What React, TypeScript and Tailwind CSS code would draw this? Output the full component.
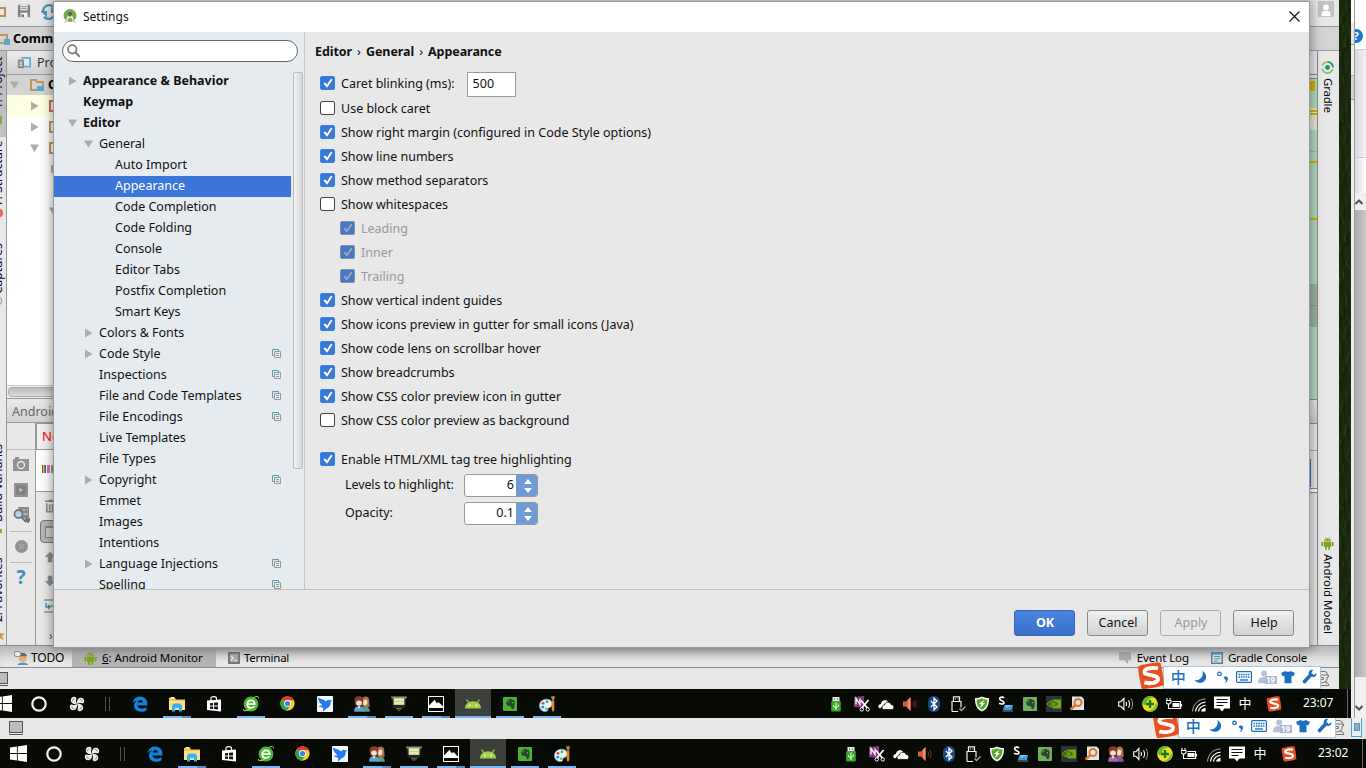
import React from "react";
import type { ReactNode } from "react";

/* ---------- small shared drawings ---------- */

type SvgProps = { w?: number; h?: number; box?: string; className?: string; children: ReactNode };
const Svg = ({ w = 16, h = 16, box = "0 0 16 16", className = "", children }: SvgProps) => (
  <svg width={w} height={h} viewBox={box} className={`shrink-0 ${className}`} fill="none">
    {children}
  </svg>
);

const DroidIcon = ({ size = 13 }: { size?: number }) => (
  <Svg w={size} h={size} box="0 0 13 13">
    <g fill="#7ba51c">
      <path d="M3 4.4C3 2.6 4.6 1.3 6.5 1.3S10 2.6 10 4.4zM3 5h7v5H3z" />
      <rect x="0.4" y="4.8" width="2" height="4.4" rx="1" />
      <rect x="10.6" y="4.8" width="2" height="4.4" rx="1" />
      <rect x="4" y="9" width="1.8" height="4" rx=".8" />
      <rect x="7.2" y="9" width="1.8" height="4" rx=".8" />
    </g>
    <path d="M4 .2l1 1.6M9 .2L8 1.8" stroke="#7ba51c" strokeWidth=".7" />
    <circle cx="5" cy="3" r=".5" fill="#fff" />
    <circle cx="8" cy="3" r=".5" fill="#fff" />
  </Svg>
);

const WindowsLogo = () => (
  <Svg w={17} h={17}>
    <path fill="#fff" d="M0 2.3L6.5 1.4V7.5H0zM7.3 1.3L16 0V7.5H7.3zM0 8.4H6.5V14.6L0 13.7zM7.3 8.4H16V16L7.3 14.7z" />
  </Svg>
);
const RingIcon = () => (
  <Svg>
    <circle cx="8" cy="8" r="6.700" stroke="#f4f4f4" strokeWidth="2.200" />
  </Svg>
);
const FanIcon = () => (
  <Svg>
    {[0, 90, 180, 270].map((a) => (
      <g key={a} transform={`rotate(${a} 8 8)`}>
        <path d="M8 8.200C4.500 8.300 1.800 7 1.800 4.200 1.800 1.600 4 .6 5.600.8 7.200 1 7.600 2.200 7.300 3.200 6.800 5 6.900 6.700 8 8.200z" fill="#ededed" />
        <path d="M3.600 5.200C3.300 3.800 4 2.900 5.400 3" stroke="#555" strokeWidth=".7" />
      </g>
    ))}
  </Svg>
);
const EdgeIcon = () => (
  <Svg>
    <path
      fill="#1283dd"
      d="M.5 7.3C1.2 3.2 4 .5 8.1.5c4.5 0 7.3 3 7.3 7.2v1.8H5.5c.2 2 1.9 3 4.2 3 1.8 0 3.3-.5 4.7-1.3v3.2c-1.5.8-3.4 1.3-5.4 1.3-4.2 0-7-2.3-7-6.1 0-2.3 1.1-4.1 3.3-5.3C3 4.600 1.500 5.800.5 7.300zM5.700 6.500h5.200C10.900 4.900 10 3.900 8.400 3.900S5.900 5 5.700 6.500z"
    />
  </Svg>
);
const FolderIcon = () => (
  <Svg>
    <path d="M0 2h6l1 1.500h9V14H0z" fill="#f5c84c" />
    <path d="M0 5h16v9H0z" fill="#ffe08a" />
    <path d="M1.500 1h4v1.500h-4z" fill="#fff3b0" />
    <path d="M3 15.500V9.500L5 7.500h6l2 2v6h-3v-3.500H6v3.500z" fill="#2fb4ee" />
  </Svg>
);
const StoreIcon = () => (
  <Svg>
    <path d="M5 5V2.500C5 1 6 .7 7.500.7S10.500 1 10.500 2.500V4" stroke="#fff" strokeWidth="1.200" />
    <path d="M1 4.500L15 3.500V15.500L1 14z" fill="#fff" />
    <path d="M4 7.200l3-.3v2.600H4zM8 6.800l4-.4v3.100H8zM4 10.400h3V13l-3-.3zM8 10.400h4v3.100L8 13z" fill="#111" />
  </Svg>
);
const BrowserIcon = () => (
  <Svg>
    <circle cx="8" cy="8" r="7.400" fill="#49b735" />
    <path d="M4.300 8.200h7.400c0-2.400-1.500-3.800-3.600-3.800-2.300 0-3.800 1.600-3.800 3.800s1.600 3.700 3.800 3.700c1.500 0 2.500-.6 3.200-1.700" stroke="#fff" strokeWidth="1.800" />
    <path d="M.8 13C-1 16 5 15 11 10.500" stroke="#c5ef6d" strokeWidth="1" />
    <path d="M10 2c3-2 6-2.500 5.500.5" stroke="#8fdc53" strokeWidth="1" />
  </Svg>
);
const ChromeIcon = () => (
  <Svg w={15} h={15}>
    <circle cx="8" cy="8" r="7.600" fill="#f8cf22" />
    <path d="M8 8L1.400 4.200A7.600 7.600 0 0 1 14.700 4.400H8z" fill="#e33b2e" />
    <path d="M1.400 4.200A7.600 7.600 0 0 0 7.300 15.600L11 9.700 8 8z" fill="#2fa24c" />
    <circle cx="8" cy="8" r="3.700" fill="#fff" />
    <circle cx="8" cy="8" r="2.800" fill="#3f80e6" />
  </Svg>
);
const BirdIcon = () => (
  <Svg>
    <rect width="16" height="16" rx="1" fill="#f6fafe" />
    <path d="M.8 1.500C4 3.200 7 3.400 9.200 5.600 9.600 3.900 11.500 3 13 4.200l2.600.2-2 1.600C14 9.300 12.200 11.600 9.600 12.200L6 15.800 6.200 12 1.300 9.900 5.600 9.200C3 7.300 1 4.800.8 1.500z" fill="#237cf0" />
  </Svg>
);
const PeopleIcon = ({ purple = false }: { purple?: boolean }) => (
  <Svg>
    <path d="M8 2.500C10-.5 15-.3 15.200 4l.4 7H8.500z" fill="#a8714a" />
    <path d="M9 4.500c1.500-1.500 4-1 4.300.5v2.500c-.5 2.500-4 2.500-4.300 0z" fill="#f9dcc4" />
    <path d="M8.500 15.700c0-4 .5-5 3-5s4 1 4.300 5z" fill={purple ? "#8c4fa8" : "#5e9c85"} />
    <path d="M.6 5C.4 1.500 2.500.2 5 .2s4.600 1.300 4.400 4.800L8.500 9.500h-7z" fill="#8a3d25" />
    <path d="M2.200 6c1-2 4.600-2 5.600 0v1.500C7.700 10.500 2.300 10.500 2.200 7.500z" fill="#fbe0cb" />
    <path d="M.2 15.700c0-4.500 1.500-5.500 4.800-5.500s4.800 1 4.800 5.500z" fill={purple ? "#a765b4" : "#5fa3cf"} />
    <path d="M3.800 10.200h2.400L5 13z" fill="#fff" />
  </Svg>
);
const ProjectorIcon = () => (
  <Svg>
    <path d="M0 .5h16L14 12H2z" fill="#262626" />
    <path d="M0 .5h16l-.6 2H.6z" fill="#8a8a8a" />
    <path d="M2.600 2h10.800v7H2.600z" fill="#c5d58b" />
    <path d="M3 4h10M3 7h10" stroke="#eef5c6" strokeWidth="1.300" />
    <path d="M5 12.700h6M6.500 14h3" stroke="#777" />
  </Svg>
);
const PhotoIcon = () => (
  <Svg>
    <rect x=".5" y=".5" width="15" height="15" fill="#080a06" stroke="#fff" />
    <path d="M1 9.500L3.500 7 6.500 3.800 9 7.500l1-1.500L11.500 7 13 8.500l2 2V12H1z" fill="#fff" />
    <path d="M1 9.500h2l1 1.500 2-1 1.500 1.500 2-1.500 1.500 1.500 2-1.500 2 2V11H1z" fill="#fff" />
  </Svg>
);
const AndroidHead = () => (
  <Svg>
    <path d="M0 12.500C0 8 3.500 5.200 8 5.200S16 8 16 12.500z" fill="#a2ce4c" />
    <path d="M1.500 3.500l2.300 3.200M14.500 3.500l-2.300 3.200" stroke="#a2ce4c" strokeWidth="1.200" />
    <circle cx="4.700" cy="9.400" r=".8" fill="#fff" />
    <circle cx="11.300" cy="9.400" r=".8" fill="#fff" />
  </Svg>
);
const EvernoteIcon = ({ pale = false }: { pale?: boolean }) => (
  <Svg w={14} h={14}>
    <rect width="16" height="16" rx="1.200" fill={pale ? "#6fb158" : "#45b52e"} />
    <path d="M3.500 5.200L6.300 2.700C8 2 10 2.400 11 3c2 .2 2.300 1.500 2.300 4 0 4-.6 6.500-2.300 6.800-1.600.1-2-1.400-1-2.500-1.500.2-2-.8-2.200-1.200C5.500 10.800 3.300 9.600 3.500 5.200z" fill="#34403a" />
    <path d="M3.500 5.500h3V3" stroke={pale ? "#6fb158" : "#45b52e"} strokeWidth=".8" />
    <circle cx="10.800" cy="6.600" r=".8" fill="#6fc25a" />
  </Svg>
);
const PaintIcon = () => (
  <Svg>
    <path d="M.4 9.500C.4 5.500 4 3 8 3.200s6 3 5 6-3.500 1.800-4 3.500 0 2.800-3 2.800-5.600-2.500-5.600-6z" fill="#e4f3fb" stroke="#5da9d8" strokeWidth=".7" />
    <circle cx="4" cy="7.300" r="1.400" fill="#e0453b" />
    <circle cx="8" cy="5.700" r="1.300" fill="#41a746" />
    <circle cx="3.800" cy="11.200" r="1.400" fill="#258bd3" />
    <circle cx="7.200" cy="12.700" r="1.200" fill="#65b84f" />
    <path d="M12 .3h4l-1 4h-2z" fill="#bb8550" />
    <path d="M12.700 4.500h2.600V14L14 16l-1.300-2z" fill="#ec8922" />
  </Svg>
);

const UsbGreen = () => (
  <Svg>
    <path d="M4.500 1h7v4h-7z" fill="#e9e9e9" />
    <path d="M6 2.500h1v1H6zM9 2.500h1v1H9z" fill="#444" />
    <rect x="3.200" y="5" width="9.600" height="10.500" rx="1" fill="#39a928" />
    <path d="M8 6.500v7.500M5.500 9v1.500L8 12M10.500 8.500V10L8 11.500" stroke="#fff" />
  </Svg>
);
const ClipperIcon = () => (
  <Svg>
    <path d="M0 1l10-1v12l-10-1z" fill="#80397b" />
    <path d="M2 8.500v-6l4 6v-6" stroke="#fff" strokeWidth="1.300" />
    <path d="M7 4.500l6.500 7.500M14.500 4l-6.500 8" stroke="#fff" strokeWidth="1.700" />
    <circle cx="7.800" cy="13.400" r="1.700" stroke="#fff" />
    <circle cx="13.700" cy="13.400" r="1.700" stroke="#fff" />
  </Svg>
);
const CloudIcon = () => (
  <Svg>
    <path d="M2 12.500C-1 11.500.5 8 3 8c0-4 5-5 7-2.500" fill="#fff" />
    <path d="M5 13.500C3 11.500 4.500 9 6.500 9c.5-3.500 5.500-3.800 6.500-.5 3-.1 3.800 4 1.200 5z" fill="#fff" stroke="#111" strokeWidth=".8" />
  </Svg>
);
const SpeakerRed = () => (
  <Svg>
    <path d="M1 5.500h3L8.500 1v14L4 10.500H1z" fill="#d5603d" />
    <path d="M6 4L8.500 1v14L6 12z" fill="#f08c6a" />
    <path d="M11 5.500q1.500 2.500 0 5M13 4q2.500 4 0 8" stroke="#7a2d20" />
  </Svg>
);
const BluetoothIcon = () => (
  <Svg>
    <rect x="2" y="0" width="12" height="16" rx="6" fill="#174a87" />
    <path d="M4.800 5L11 11l-3 2.800V2.200L11 5l-6.200 6" stroke="#fff" strokeWidth="1.300" />
  </Svg>
);
const UsbOutline = () => (
  <Svg>
    <path d="M3.500 5V.8h6V5M2 15.500V5.500h9v6M2 15.500h6" stroke="#f2f2f2" strokeWidth="1.200" />
    <path d="M5 2.500h1v1H5zM7.500 2.500h1v1h-1z" fill="#fff" />
    <path d="M9.500 12.500l2 2 4-4" stroke="#aaa" strokeWidth="1.300" />
  </Svg>
);
const ShieldIcon = () => (
  <Svg>
    <path d="M8 .4C10 1.800 13 2 15 2c0 6-1 11-7 13.600C2 13 1 8 1 2c2 0 5-.2 7-1.600z" fill="#f5f5f5" />
    <path d="M8 2.200C9.500 3 11.500 3.500 13.400 3.500c0 4.500-1 8-5.400 10.300C3.600 11.500 2.600 8 2.600 3.500 4.500 3.500 6.500 3 8 2.200z" fill="#58a72e" />
    <path d="M10.500 3.500L5 8h2.300L6 12l5-5H8.500z" fill="#fff" />
  </Svg>
);
const SyncIcon = () => (
  <Svg>
    <path d="M6.500 9h8.500l-1 5H5z" fill="#3b9bdb" />
    <path d="M7.500 9.300h6.800L8 12z" fill="#85c9f0" />
    <path d="M4.500 15H15" stroke="#888" strokeWidth="1" />
    <path d="M6 2C5.200.7 1.600.8 1.600 2.800S6 4.500 6 6.500 2 8.500 1.200 7" stroke="#fff" strokeWidth="1.600" />
  </Svg>
);
const NvidiaIcon = () => (
  <Svg>
    <rect width="16" height="16" fill="#2b323c" />
    <rect x="7" y="3.500" width="8" height="9" fill="#76a814" />
    <path d="M1 8c3-4.500 8.500-4.500 11.500 0-3 4-8.500 4-11.500 0z" fill="#3c5216" stroke="#79ad12" strokeWidth="1" />
    <path d="M3.800 8c1.500-2.400 4.700-2.400 6 0C8.500 10.300 5.300 10.300 3.800 8zm2.700-1v2l2-1z" stroke="#79ad12" strokeWidth=".9" />
  </Svg>
);
const FinderIcon = () => (
  <Svg>
    <path d="M3 .5h9.500L15 3v11H3z" fill="#dfe6ef" />
    <circle cx="9" cy="6.500" r="3.500" stroke="#e0782b" strokeWidth="2" />
    <path d="M6.500 9l-5 4.500" stroke="#e0782b" strokeWidth="2.600" />
  </Svg>
);
const VolumeIcon = () => (
  <Svg>
    <path d="M.7 5.700h2.200l3-3.200v11l-3-3.200H.7z" stroke="#fff" strokeWidth="1.100" />
    <path d="M8 6q1.200 2 0 4M10.500 4.300q2.200 3.700 0 7.400" stroke="#fff" strokeWidth="1.100" />
    <path d="M13 2.500q3.200 5.500 0 11" stroke="#999" />
  </Svg>
);
const PlusBall = () => (
  <Svg>
    <circle cx="8" cy="8" r="7.800" fill="#f6dc20" />
    <path d="M.8 5C3-.2 9-1.200 12.500 1.600 8 1.200 4.500 4 3.500 9.500 1.500 9 .5 7 .8 5z" fill="#5ebb31" />
    <path d="M15.200 10.500c-1.500 4.500-6 6.300-10 4.500 5-.6 7.500-3.500 8.500-8 1.500 1 1.800 2.200 1.500 3.500z" fill="#79c63a" />
    <path d="M8 4v8M4 8h8" stroke="#147b20" strokeWidth="2.400" />
  </Svg>
);
const BatteryIcon = () => (
  <Svg>
    <path d="M6.500 5.500h8v7H5.500" stroke="#fff" strokeWidth="1.200" />
    <path d="M6.500 7h7v4h-7zM15 8h1v2.500h-1z" fill="#fff" />
    <path d="M1 2v2.500M4 2v2.500M0 4.500h5v2L3.500 8h-2L0 6.500zM2.500 8v4.500h3" stroke="#fff" strokeWidth="1.100" />
  </Svg>
);
const WifiIcon = () => (
  <Svg>
    <path d="M2.500 15.500C3 8.500 8 3 15.500 3" stroke="#aaa" />
    <path d="M5.500 15.500c.5-5 4.500-9 10-9.300M8.500 15.500c.4-3.200 3.200-5.900 7-6.200" stroke="#fff" strokeWidth="1.200" />
    <path d="M11 15.500c.4-2 2.200-3.500 4.500-3.700v3.700z" fill="#fff" />
  </Svg>
);
const NoteIcon = () => (
  <Svg>
    <path d="M0 .5h16v12h-5.500L8 15.500 5.500 12.500H0z" fill="#fff" />
    <path d="M2.500 3.500h11M2.500 6.500h11M2.500 9.500h7" stroke="#111" />
  </Svg>
);
const SogouMark = ({ size = 16 }: { size?: number }) => (
  <Svg w={size} h={size}>
    <path d="M.6 2.800C.6 1.800 12.500-.2 13.300.5 14 1.200 15.800 12.500 15.200 13.200 14.600 14 4 15.900 3 15.400 2.200 15 .6 4 .6 2.800z" fill="#e8501f" />
    <path d="M12 3.700C9.500 3 4.300 3.400 4.200 5.700 4.100 8 11.900 7 12 9.600c.1 2.600-5 2.900-7.800 2.100" stroke="#fff" strokeWidth="2.200" />
  </Svg>
);

/* ---------- taskbars ---------- */

const apps: { icon: ReactNode; line?: "single" | "double"; active?: boolean }[] = [
  { icon: <EdgeIcon /> },
  { icon: <FolderIcon />, line: "double" },
  { icon: <StoreIcon /> },
  { icon: <BrowserIcon />, line: "single" },
  { icon: <ChromeIcon /> },
  { icon: <BirdIcon /> },
  { icon: <PeopleIcon />, line: "double" },
  { icon: <ProjectorIcon />, line: "single" },
  { icon: <PhotoIcon />, line: "double" },
  { icon: <AndroidHead />, line: "single", active: true },
  { icon: <EvernoteIcon />, line: "single" },
  { icon: <PaintIcon />, line: "single" },
];

const Slot = ({ children, className = "w-6" }: { children?: ReactNode; className?: string }) => (
  <div className={`flex shrink-0 items-center justify-center ${className}`}>{children}</div>
);

const Taskbar = ({ time, extra }: { time: string; extra: boolean }) => (
  <div className="flex h-full w-[1381px] shrink-0 bg-[#080b05]">
    <Slot className="w-9"><WindowsLogo /></Slot>
    <Slot className="w-9"><RingIcon /></Slot>
    <Slot className="w-10"><FanIcon /></Slot>
    <div className="flex w-6 items-center justify-center gap-[3px] pr-1">
      <div className="h-3.5 w-px bg-[#50524e]" />
      <div className="h-3.5 w-px bg-[#50524e]" />
    </div>
    {apps.map((a, i) => (
      <div key={i} className="flex w-[37px] shrink-0 flex-col items-stretch">
        <div className={`flex flex-1 items-center justify-center pt-[2px] ${a.active ? "ml-px bg-[#3d3f3a]" : ""}`}>{a.icon}</div>
        <div className={`flex h-0.5 ${a.active ? "ml-px" : "ml-[5px] w-7"}`}>
          {a.line && <div className="flex-1 bg-[#79b6f4]" />}
          {a.line === "double" && <div className="w-[9px] bg-[#5b8abb]" />}
        </div>
      </div>
    ))}
    <div className="w-[258px] shrink-0" />
    <Slot className="w-[26px] pr-px"><UsbGreen /></Slot>
    <Slot className="w-6 pl-px"><ClipperIcon /></Slot>
    <Slot className="w-6 pl-px"><CloudIcon /></Slot>
    <Slot className="w-6 pl-px"><SpeakerRed /></Slot>
    <Slot className="w-6 pl-px"><BluetoothIcon /></Slot>
    <Slot className="w-6 pl-px"><UsbOutline /></Slot>
    <Slot className="w-6 pl-px"><ShieldIcon /></Slot>
    <Slot className="w-6 pl-px"><SyncIcon /></Slot>
    <Slot className="w-6 pl-px"><EvernoteIcon pale /></Slot>
    <Slot className="w-6 pl-px"><NvidiaIcon /></Slot>
    <Slot className="w-6 pr-px"><FinderIcon /></Slot>
    <Slot>{extra && <PeopleIcon purple />}</Slot>
    <Slot className="w-6 pl-px"><VolumeIcon /></Slot>
    <Slot className="w-6 pl-px"><PlusBall /></Slot>
    <Slot className="w-6 pl-px"><BatteryIcon /></Slot>
    <Slot className="w-[26px]"><WifiIcon /></Slot>
    <Slot className="w-[22px]"><NoteIcon /></Slot>
    <Slot className="w-6 pb-0.5 font-['Noto_Sans_CJK_SC',sans-serif] text-[13px] text-white">中</Slot>
    <Slot className="w-[34px]"><SogouMark /></Slot>
    <div className="mr-3 ml-3 flex w-8 items-center pb-0.5 text-[12px] tracking-[-0.1px] text-white">{time}</div>
    <div className="h-full w-px bg-[#666]" />
  </div>
);

/* ---------- floating input method bar ---------- */

const InputBar = () => (
  <div className="flex items-start">
    <div className="z-10 -mr-0.5"><SogouMark size={28} /></div>
    <div className="mt-1 flex h-[23px] w-[158px] items-center border border-[#a9c8e0] bg-white pb-0.5 pl-1 text-[#1b70c0]">
      <div className="flex w-[21px] justify-center font-['Noto_Sans_CJK_SC',sans-serif] text-[15px] leading-none font-medium">中</div>
      <Slot><Svg w={14} h={14}><path d="M9.500 1C15 4 15 10 11.500 12.800 8 15.600 3 15 .5 11.500 5 13 12 8 9.500 1z" fill="#1b70c0" /></Svg></Slot>
      <Slot className="w-5">
        <Svg w={14} h={14}><circle cx="4" cy="4.500" r="2" stroke="#1b70c0" strokeWidth="1.500" /><path d="M9.500 7.500q5-1 4 3.500-.6 3-3.600 4 1.700-2 1.600-3.500-3-.5-2-4z" fill="#1b70c0" /></Svg>
      </Slot>
      <Slot className="w-6 pr-0.5">
        <Svg w={16} h={12} box="0 0 16 12"><rect x=".6" y=".6" width="14.800" height="10.800" rx="1" stroke="#1b70c0" strokeWidth="1.200" /><path d="M2.500 3.500h11M2.500 6h11" stroke="#1b70c0" strokeWidth="1.600" strokeDasharray="1.600 .8" /><path d="M4 9h8" stroke="#1b70c0" strokeWidth="1.400" /></Svg>
      </Slot>
      <div className="relative flex w-[22px] justify-center">
        <Svg w={14} h={14} className="-ml-1"><circle cx="7" cy="4" r="3.400" fill="#b5c1d8" /><path d="M0 15c0-5 2-7 7-7s7 2 7 7z" fill="#b5c1d8" /></Svg>
        <span className="absolute top-1.5 left-2 flex h-2 w-[12px] items-center justify-center bg-[#aab7d0] text-[8px] leading-none font-bold text-white">19</span>
      </div>
      <Slot className="w-5"><Svg w={14} h={14}><path d="M5 1q3 2 6 0l5 2.500-2 4-2-.8V15H4V6.700l-2 .8-2-4z" fill="#1b70c0" /></Svg></Slot>
      <Slot className="w-[22px]"><Svg w={15} h={15}><path d="M15.500 4.500L12.500 6.500 10 4 12 .8C9 .2 6.500 2.500 7.300 5.700L.8 12.500q-.5 1.500.8 2.500 1.300.8 2.300-.2L10 8.300C13.200 9 16 7.500 15.500 4.500z" fill="#1b70c0" /></Svg></Slot>
    </div>
    <Svg w={9} h={16} className="mt-2" box="0 0 9 16">
      <path d="M0 1.500h4q2.500.5 2.500 3.500M0 5h7.500v2H6v3.500Q3 13 0 13M0 7.500h2.500v2H0M4 12.500q4 0 4 3H0" stroke="#777" strokeWidth="1" />
    </Svg>
  </div>
);

const MemoryBox = () => (
  <div className="flex shrink-0 flex-col gap-px">
    <div className="h-3 w-3.5 border border-[#555] bg-[#bdbdbd]" />
    <div className="h-px w-3.5 bg-[#555]" />
  </div>
);

/* ---------- IDE behind the dialog ---------- */

const RailText = ({ children, className }: { children: ReactNode; className: string }) => (
  <div className={`-ml-[10px] flex w-4 shrink-0 rotate-180 items-center justify-center text-[12px] leading-4 whitespace-nowrap text-[#05053c] [writing-mode:vertical-rl] ${className}`}>
    {children}
  </div>
);

const Right = () => <Svg w={9} h={10} box="0 0 9 10"><path d="M1 0.500L8.500 5 1 9.500z" fill="#acacac" /></Svg>;
const Down = () => <Svg w={9} h={8} box="0 0 9 8"><path d="M0 .5h9L4.500 8z" fill="#acacac" /></Svg>;

const SmallFolder = ({ color = "#bf955c" }: { color?: string }) => (
  <Svg w={15} h={14} box="0 0 15 14">
    <path d="M1 2h5l1 2h6v8H1z" stroke={color} strokeWidth="2" />
    <path d="M7 8h7v5H7z" fill="#55a7cf" />
  </Svg>
);

const LeftBackdrop = () => (
  <div className="flex w-[60px] shrink-0 flex-col overflow-hidden">
    <div className="flex h-[27px] shrink-0 items-start gap-2.5 border-b border-[#999] bg-[#e8e8e8] pt-1">
      <Svg w={6} h={16} box="0 0 6 16"><path d="M0 4h5v8H0" stroke="#be8e50" strokeWidth="2" /></Svg>
      <Svg w={14} h={14} className="ml-px"><path d="M1 1h14v14H1z" fill="#858585" /><path d="M4 1h8v6H4zM4 10h8v5H4z" fill="#f3f3f3" /><path d="M5 3h6M5 5h6" stroke="#777" /><path d="M5 12h3v3H5z" fill="#3488b5" /></Svg>
      <Svg w={16} h={16}><path d="M13 3C8-1 2 2 2 8M3 13c5 4 11 1 11-5" stroke="#4f95bb" strokeWidth="2.400" /><path d="M-1 7h7v6zM16 9h-6V3z" fill="#4f95bb" /></Svg>
    </div>
    <div className="flex h-6 shrink-0 items-center border-b border-[#999] bg-[#d4d4d4] pt-px text-[12.500px] font-bold">
      <Svg w={10} h={14} box="0 0 10 14"><path d="M0 3h7v8H0" stroke="#bf955c" strokeWidth="2" /><path d="M4 7h6v6H4z" fill="#58a7cf" /></Svg>
      <span className="ml-[3px]">Comm</span>
    </div>
    <div className="flex min-h-0 flex-1">
      <div className="flex w-[7px] shrink-0 flex-col overflow-hidden border-r border-[#999] bg-[#e8e8e8]">
        <div className="flex h-[86px] shrink-0 flex-col bg-[#c0c0c0]">
          <RailText className="h-[64px]">1: Project</RailText>
          <div className="-ml-1 h-2.5 w-1.5 rounded-full bg-[#79ac3a]" />
        </div>
        <RailText className="h-[72px]">7: Structure</RailText>
        <div className="-ml-1 h-2 w-[7px] shrink-0 rounded-full bg-[#e06a64]" />
        <RailText className="mt-6 h-[56px]">Captures</RailText>
        <div className="-ml-1 h-2 w-1.5 shrink-0 rounded-full border border-[#999]" />
        <RailText className="mt-[132px] h-[92px]">Build Variants</RailText>
        <div className="h-1 w-0.5 bg-[#89ae29]" />
        <RailText className="mt-5 h-[74px]">2: Favorites</RailText>
        <Svg w={6} h={10} box="0 0 6 10" className="mt-1"><path d="M0 2l5 1-3 2 2 4-4-2z" fill="#d69545" /></Svg>
      </div>
      <div className="flex min-w-0 flex-1 flex-col bg-white text-[12.500px]">
        <div className="flex h-[24px] shrink-0 items-center gap-1.5 border-b border-[#999] bg-linear-to-b from-[#ececec] to-[#d0d0d0] pt-px pl-2.5 text-[#333]">
          <Svg w={14} h={14}><path d="M5 2h10v10H8" stroke="#6baac8" strokeWidth="2" fill="#d4eaf6" /><path d="M1 4h7v10H1z" fill="#888" /><path d="M3 7h3M3 9h3M3 11h3" stroke="#fff" /></Svg>
          Pro
        </div>
        <div className="flex h-5 shrink-0 items-center bg-[#d4d4d4] pl-[3px]"><Down /><div className="ml-[11px]"><SmallFolder /></div><b className="ml-[3px]">C</b></div>
        <div className="flex h-[21px] shrink-0 items-center bg-[#ffffe4] pl-[23px]"><Right /><div className="ml-2.5"><SmallFolder color="#cd6860" /></div></div>
        <div className="flex h-[21px] shrink-0 items-center pl-[23px]"><Right /><div className="ml-2.5"><SmallFolder /></div></div>
        <div className="flex h-[21px] shrink-0 items-center pl-[23px]"><Down /><div className="ml-2.5"><SmallFolder /></div></div>
        <div className="flex h-[21px] shrink-0 items-center pl-[43px]"><Right /></div>
        <div className="mt-[21px] flex h-[21px] shrink-0 items-center pl-[42px]"><Down /></div>
        <div className="flex-1" />
        <div className="h-[13px] shrink-0 border-t border-[#ccc] bg-[#eee] pt-px pl-px"><div className="h-2.5 rounded-sm border border-[#aaa] bg-linear-to-b from-[#bbb] to-[#ddd]" /></div>
        <div className="flex h-[25px] shrink-0 items-center border-y border-[#999] bg-linear-to-b from-[#eaeaea] to-[#d2d2d2] pt-1 pl-[5px] text-[#666]">Android</div>
        <div className="flex h-[222px] shrink-0 bg-[#e8e8e8]">
          <div className="flex w-[29px] shrink-0 flex-col items-center border-r border-[#999]">
            <div className="h-[27px] w-full shrink-0 border-b border-[#bbb]" />
            <Svg w={16} h={14} box="0 0 16 14" className="mt-[7px]"><path d="M0 2h16v12H0zM2 0h4v2H2z" fill="#929292" /><circle cx="8" cy="8" r="3.500" stroke="#eee" strokeWidth="1.300" /></Svg>
            <Svg w={14} h={14} className="mt-3"><rect width="16" height="16" fill="#929292" /><rect x="2.500" y="2.500" width="11" height="11" fill="#808080" /><path d="M6 5.500l4.500 2.500L6 10.500z" fill="#c4c4c4" /></Svg>
            <Svg w={17} h={17} className="mt-[9px]" box="0 0 17 17"><path d="M5 1h11v11H9z" fill="#888" /><path d="M10 4h2M14 4h1M10 8h5" stroke="#ddd" /><circle cx="5.500" cy="8" r="4" fill="#b2d7eb" stroke="#777" strokeWidth="1.800" /><path d="M8 11l5 5M13 13h4l-2 3z" stroke="#666" strokeWidth="1.700" /></Svg>
            <div className="mt-2 h-px w-[22px] shrink-0 bg-[#bbb]" />
            <Svg w={13} h={13} className="mt-2"><circle cx="8" cy="8" r="8" fill="#929292" /><path d="M5 5l6 6M11 5l-6 6" stroke="#aaa" strokeWidth="1.500" /></Svg>
            <div className="mt-[9px] h-px w-[22px] shrink-0 bg-[#bbb]" />
            <div className="mt-px text-[19px] leading-[26px] font-bold text-[#3a8fbd]">?</div>
          </div>
          <div className="flex min-w-0 flex-1 flex-col overflow-hidden">
            <div className="flex h-[27px] shrink-0 items-center border border-[#999] bg-[#f0f0f0] pl-[5px] text-[13px] text-[#f00]">No</div>
            <div className="flex h-[42px] shrink-0 items-center border-b border-[#999] bg-white pr-1 pb-1 pl-1.5">
              <div className="h-2 w-px bg-[#c33]" /><div className="h-2 w-px bg-[#dc3]" /><div className="h-2 w-px bg-[#4a4]" /><div className="mr-px h-2 w-px bg-[#36b]" />
              <div className="mr-px h-2 w-[3px] bg-[#e068c8]" /><div className="h-2 w-1 bg-[#8ba54b]" />
            </div>
            <Svg w={15} h={16} className="mt-1.5 ml-2"><path d="M1 3h13M5 2h6M3 5v9h9V5M6 6v7M9 6v7" stroke="#888" strokeWidth="1.600" /></Svg>
            <div className="mt-1.5 ml-1 flex h-[23px] w-6 shrink-0 items-center rounded-sm border border-[#777] bg-[#b7b7b7] pl-1"><div className="h-3 w-3 border border-t-2 border-[#888] bg-[#ccc]" /></div>
            <Svg w={12} h={12} className="mt-2 ml-2"><path d="M8 1l7 7h-4v7H5V8H1z" fill="#8b8b8b" /></Svg>
            <Svg w={12} h={12} className="mt-3 ml-2"><path d="M5 1h6v7h4l-7 7-7-7h4z" fill="#8b8b8b" /></Svg>
            <Svg w={12} h={14} box="0 0 12 14" className="mt-3 ml-2"><path d="M0 1h12M6 7h6M0 13h12" stroke="#666" /><path d="M2 4v4h4M4 6l2 2-2 2" stroke="#3d8bb5" strokeWidth="1.300" /></Svg>
            <div className="mt-[17px] ml-[13px] text-[12px] leading-none text-[#555]">›</div>
          </div>
        </div>
      </div>
    </div>
  </div>
);

const RightBackdrop = () => (
  <div className="flex w-[39px] shrink-0 flex-col">
    <div className="flex h-[27px] shrink-0 justify-end border-b border-[#999] bg-[#e8e8e8] pr-[5px]">
      <div className="mt-px flex h-4 w-4 items-end justify-center bg-[#c3c3c3]"><Svg w={12} h={14}><circle cx="8" cy="4.500" r="3.800" fill="#fff" /><path d="M2 16v-4q1-3 6-3t6 3v4z" fill="#fff" /></Svg></div>
    </div>
    <div className="h-6 shrink-0 border-b border-[#999] bg-[#d4d4d4]" />
    <div className="flex min-h-0 flex-1">
      <div className="flex w-[18px] shrink-0 flex-col border-r border-[#8a8a8a] bg-[#e8e8e8]">
        <div className="h-6 shrink-0 border-b border-[#888]" />
        <div className="h-1 shrink-0 border-b border-[#888]" />
        <div className="h-[29px] shrink-0 bg-[#b3dabd] pt-[2px] pl-2.5"><div className="h-2.5 w-[5px] bg-[#d4b200]" /></div>
        <div className="h-[22px] shrink-0 bg-[#eae8cf] pt-[2px]"><div className="mb-px h-0.5 bg-[#d4b200]" /><div className="h-0.5 bg-[#d4b200]" /></div>
        <div className="h-[22px] shrink-0 border-b border-[#9bbba3] bg-[#b3dabd]" />
        <div className="h-[9px] shrink-0 bg-[#b3dabd]" />
        <div className="h-0.5 shrink-0 bg-[#d4b200]" />
        <div className="h-[55px] shrink-0 bg-[#b3dabd]" />
        <div className="h-0.5 shrink-0 bg-[#d4b200]" />
        <div className="h-[64px] shrink-0 bg-[#b3dabd]" />
        <div className="h-[22px] shrink-0 border-b border-[#889c8c] bg-[#9db5a2]" />
        <div className="h-[21px] shrink-0 bg-[#9db5a2]" />
        <div className="h-[72px] shrink-0 bg-[#b3dabd]" />
        <div className="h-[25px] shrink-0 border-y border-[#888] bg-linear-to-b from-[#e8e8e8] to-[#d0d0d0]" />
        <div className="h-[27px] shrink-0 border-b border-[#aaa]" />
        <div className="h-[38px] shrink-0 border-b border-[#888] py-2"><div className="h-7 w-[11px] bg-[#3c72ca]" /></div>
        <div className="h-1 shrink-0 border-b border-[#888] bg-white" />
      </div>
      <div className="flex flex-1 flex-col items-center bg-[#e8e8e8] pr-[2px] text-[12px] text-black">
        <Svg w={13} h={13} className="mt-2.5"><circle cx="8" cy="8" r="6.800" stroke="#86bd63" strokeWidth="2" strokeDasharray="17 4" transform="rotate(20 8 8)" /><path d="M8 1.200A6.800 6.800 0 0 1 14.800 8" stroke="#189959" strokeWidth="2" /><circle cx="8" cy="8" r="3" fill="#189959" /></Svg>
        <div className="mt-1 h-[35px] w-4 text-[11.500px] leading-4 tracking-[-0.2px] whitespace-nowrap [writing-mode:vertical-rl]">Gradle</div>
        <div className="h-[424px] shrink-0" />
        <DroidIcon />
        <div className="mt-1 h-[82px] w-4 text-[11.500px] leading-4 whitespace-nowrap [writing-mode:vertical-rl]">Android Model</div>
      </div>
    </div>
  </div>
);

const BottomTools = () => (
  <div className="flex h-[23px] shrink-0 items-stretch border-y border-[#8c8c8c] bg-[#e8e8e8] pt-px text-[11.500px] tracking-[-0.08px] shadow-[inset_0_14px_12px_-6px_rgba(0,0,0,0.22)]">
    <div className="flex w-[72px] items-center gap-[3px] pt-0.5 pl-3.5 text-[12px]">
      <Svg w={14} h={14}><circle cx="10" cy="8" r="4.500" fill="#e5ad78" /><path d="M5 6c1-6 9-5 10 0z" fill="#656565" /><path d="M4 16c0-4 12-4 12 0z" fill="#4b98c6" /><ellipse cx="4" cy="3.500" rx="4" ry="3" fill="#eee" stroke="#777" /></Svg>
      <span className="tracking-[-0.2px]">TODO</span>
    </div>
    <div className="-mt-px flex w-36 items-center gap-[5px] bg-[#b4b4b4] pt-[3px] pl-3">
      <DroidIcon />
      <span><u>6</u>: Android Monitor</span>
    </div>
    <div className="flex items-center gap-1 pt-0.5 pl-3">
      <Svg w={12} h={12}><rect width="16" height="16" fill="#777" /><rect x="2.500" y="2.500" width="11" height="11" fill="#aaa" /><path d="M4 5l3 3-3 3M8 11h4" stroke="#f2f2f2" strokeWidth="1.500" /></Svg>
      <span className="tracking-[-0.25px]">Terminal</span>
    </div>
    <div className="flex-1" />
    <div className="flex items-center gap-1.5 pt-0.5 pr-[22px]"><Svg w={12} h={12}><path d="M0 0h16v11h-4v5l-5-5H0z" fill="#aaa" /></Svg>Event Log</div>
    <div className="flex items-center gap-[5px] pt-0.5 pr-8"><Svg w={12} h={12}><rect x="1" y="1" width="14" height="14" fill="#cfe5f0" stroke="#777" strokeWidth="2" /><path d="M1 2h14" stroke="#4f9dc3" strokeWidth="3" /><path d="M4 6h8M4 9h8M4 12h5" stroke="#397b9c" /></Svg><span className="tracking-[-0.22px]">Gradle Console</span></div>
  </div>
);

/* ---------- settings dialog ---------- */

type Node = { label: string; depth: 0 | 1 | 2; arrow?: "right" | "down"; copy?: boolean };
const tree: Node[] = [
  { label: "Appearance & Behavior", depth: 0, arrow: "right" },
  { label: "Keymap", depth: 0 },
  { label: "Editor", depth: 0, arrow: "down" },
  { label: "General", depth: 1, arrow: "down" },
  { label: "Auto Import", depth: 2 },
  { label: "Appearance", depth: 2 },
  { label: "Code Completion", depth: 2 },
  { label: "Code Folding", depth: 2 },
  { label: "Console", depth: 2 },
  { label: "Editor Tabs", depth: 2 },
  { label: "Postfix Completion", depth: 2 },
  { label: "Smart Keys", depth: 2 },
  { label: "Colors & Fonts", depth: 1, arrow: "right" },
  { label: "Code Style", depth: 1, arrow: "right", copy: true },
  { label: "Inspections", depth: 1, copy: true },
  { label: "File and Code Templates", depth: 1, copy: true },
  { label: "File Encodings", depth: 1, copy: true },
  { label: "Live Templates", depth: 1 },
  { label: "File Types", depth: 1 },
  { label: "Copyright", depth: 1, arrow: "right", copy: true },
  { label: "Emmet", depth: 1 },
  { label: "Images", depth: 1 },
  { label: "Intentions", depth: 1 },
  { label: "Language Injections", depth: 1, arrow: "right", copy: true },
  { label: "Spelling", depth: 1, copy: true },
];
const indents = ["pl-3.5", "pl-[30px]", "pl-[46px]"];

const TreeRow = ({ node }: { node: Node }) => {
  const selected = node.label === "Appearance";
  return (
    <div className={`flex h-[21px] shrink-0 items-center pr-2.5 pb-px ${indents[node.depth]} ${selected ? "bg-[#3a75d7] text-white" : ""}`}>
      <div className="flex w-[15px] shrink-0 items-center">{node.arrow === "right" ? <Right /> : node.arrow === "down" ? <Down /> : null}</div>
      <span className={`flex-1 whitespace-nowrap ${node.depth === 0 ? "font-bold" : ""}`}>{node.label}</span>
      {node.copy && (
        <Svg w={9} h={9} box="0 0 9 9" className="mb-px">
          <path d="M2 6.500H.5v-6h6V2" stroke="#5b9dbb" />
          <path d="M2.500 2.500h6v6h-6zM4 4.500h3M4 6.500h3" stroke="#999" />
        </Svg>
      )}
    </div>
  );
};

const Check = ({ label, on = true, dim = false }: { label: string; on?: boolean; dim?: boolean }) => (
  <div className={`flex h-6 items-center ${dim ? "ml-5 text-[#999]" : ""}`}>
    <div className={`mr-1.5 mb-0.5 flex h-3.5 w-[15px] shrink-0 items-center justify-center rounded-[2px] ${on ? (dim ? "border border-[#8b8f97] bg-[#3e78cf]" : "border border-[#2f85ef] bg-[#3c76d4]") : "border border-[#444] bg-white"}`}>
      {on && (
        <Svg w={10} h={10} box="0 0 10 10">
          <path d="M1.300 5L4 8.200 8.700 1.300" stroke={dim ? "#a6a6a6" : "#fff"} strokeWidth="2" />
        </Svg>
      )}
    </div>
    <span className="pt-px whitespace-nowrap">{label}</span>
  </div>
);

const Spinner = ({ value }: { value: string }) => (
  <div className="flex h-[23px] w-[74px] overflow-hidden rounded-[3px] border border-[#999] bg-white">
    <div className="flex flex-1 items-center justify-end pr-0.5 pb-px">{value}</div>
    <div className="flex w-[21px] flex-col items-center justify-center gap-1 bg-[#6e9bd6] pt-px pl-0.5">
      <Svg w={8} h={5} box="0 0 8 5"><path d="M0 5h8L4 0z" fill="#fff" /></Svg>
      <Svg w={8} h={5} box="0 0 8 5"><path d="M0 0h8L4 5z" fill="#fff" /></Svg>
    </div>
  </div>
);

const Button = ({ label, kind = "plain" }: { label: string; kind?: "plain" | "primary" | "off" }) => (
  <div className={`flex h-[26px] w-[61px] items-center justify-center rounded-[3px] border pt-px pl-px ${kind === "primary" ? "border-[#3569b8] bg-linear-to-b from-[#4a86e0] to-[#386fc9] font-bold text-white" : kind === "off" ? "border-[#aaa] bg-[#e8e8e8] text-[#999]" : "border-[#888] bg-linear-to-b from-[#f0f0f0] to-[#d2d2d2]"}`}>
    {label}
  </div>
);

const Dialog = () => (
  <div className="absolute top-px left-[53px] flex h-[647px] w-[1257px] flex-col border border-[#999] bg-[#e8e8e8] text-[12.500px] text-[#111] shadow-[0_0_10px_2px_rgba(0,0,0,0.35)]">
    <div className="flex h-[30px] shrink-0 items-center bg-white pl-[9px]">
      <Svg w={14} h={15} box="0 0 14 15" className="mb-0.5"><circle cx="7" cy="6.500" r="6.500" fill="#77ad45" /><path d="M7 3l-3.500 9M7 3l3.500 9M4.500 8.500h5" stroke="#e8e8e8" strokeWidth="1.500" /><circle cx="7" cy="5" r="2.200" fill="#5c6268" /><path d="M2 13.500l1.500-2M12 13.500l-1.500-2" stroke="#999" /></Svg>
      <span className="ml-1.5 flex-1 text-[12px]">Settings</span>
      <Svg w={11} h={11} className="mr-[9px] mb-px" box="0 0 11 11"><path d="M.5.5l10 10M10.500.5l-10 10" stroke="#111" strokeWidth="1.100" /></Svg>
    </div>
    <div className="flex min-h-0 flex-1">
      <div className="flex w-[251px] shrink-0 flex-col border-r border-[#c4c4c4] bg-[#e6ebf0]">
        <div className="mt-2 ml-2 flex h-[22px] w-[236px] shrink-0 items-center rounded-full border border-[#666] bg-white pl-1">
          <Svg w={14} h={14} box="0 0 14 14"><circle cx="5.300" cy="5.300" r="4.200" stroke="#808080" strokeWidth="1.800" /><path d="M8.300 8.300l4.500 4.500" stroke="#808080" strokeWidth="2.200" /></Svg>
        </div>
        <div className="mt-[9px] flex min-h-0 flex-1">
          <div className="flex w-[237px] shrink-0 flex-col overflow-hidden">
            {tree.map((n) => <TreeRow key={n.label} node={n} />)}
          </div>
          <div className="mt-px ml-0.5 h-[397px] w-2.5 rounded-xs border border-[#bbb] bg-linear-to-r from-[#f4f4f4] to-[#d4d4d4]" />
        </div>
      </div>
      <div className="flex flex-1 flex-col pl-2.5">
        <div className="mt-2.5 flex h-5 items-center gap-[5px] font-bold tracking-[-0.06px]">
          <span>Editor</span><span className="font-normal">›</span><span>General</span><span className="font-normal">›</span><span>Appearance</span>
        </div>
        <div className="mt-[10px] ml-[5px] flex flex-col">
          <div className="mb-px flex h-6 items-start">
            <Check label="Caret blinking (ms):" />
            <div className="ml-3 flex h-[25px] w-[49px] shrink-0 items-center border border-[#999] bg-white pb-px pl-[5px]">500</div>
          </div>
          <Check label="Use block caret" on={false} />
          <Check label="Show right margin (configured in Code Style options)" />
          <Check label="Show line numbers" />
          <Check label="Show method separators" />
          <Check label="Show whitespaces" on={false} />
          <Check label="Leading" dim />
          <Check label="Inner" dim />
          <Check label="Trailing" dim />
          <Check label="Show vertical indent guides" />
          <Check label="Show icons preview in gutter for small icons (Java)" />
          <Check label="Show code lens on scrollbar hover" />
          <Check label="Show breadcrumbs" />
          <Check label="Show CSS color preview icon in gutter" />
          <Check label="Show CSS color preview as background" on={false} />
          <div className="h-[15px]" />
          <Check label="Enable HTML/XML tag tree highlighting" />
          <div className="mt-[2px] ml-[25px] flex h-[23px] items-center"><span className="w-[119px] pb-px tracking-[-0.1px]">Levels to highlight:</span><Spinner value="6" /></div>
          <div className="mt-[5px] ml-[25px] flex h-[23px] items-center"><span className="w-[119px] pb-px">Opacity:</span><Spinner value="0.1" /></div>
        </div>
      </div>
    </div>
    <div className="flex h-[58px] shrink-0 justify-end gap-3 border-t border-[#c0c0c0] pt-5 pr-[15px]">
      <Button label="OK" kind="primary" />
      <Button label="Cancel" />
      <Button label="Apply" kind="off" />
      <Button label="Help" />
    </div>
  </div>
);

/* ---------- desktops ---------- */

const Grass = () => (
  <div className="w-3 shrink-0 bg-[#1a290d]">
    <svg width="12" height="689" viewBox="0 0 12 689">
      {Array.from({ length: 260 }, (_, i) => (
        <path key={i} d={`M${(i * 7) % 12} ${i * 2.7}l${((i * 5) % 9) - 4} ${5 + ((i * 3) % 8)}`} stroke={i % 3 === 0 ? "#0f1a07" : i % 3 === 1 ? "#2c4416" : "#1f3310"} strokeWidth="0.8" />
      ))}
    </svg>
  </div>
);

const InnerDesktop = () => (
  <div className="relative flex h-[718px] w-[1351px] shrink-0 flex-col overflow-hidden">
    <div className="flex h-[689px] shrink-0">
      <div className="relative flex w-[1339px] shrink-0 flex-col overflow-hidden bg-[#e8e8e8]">
        <div className="flex h-[645px] shrink-0 justify-between">
          <LeftBackdrop />
          <RightBackdrop />
        </div>
        <BottomTools />
        <div className="-ml-1.5 flex flex-1 pt-1"><MemoryBox /></div>
        <Dialog />
      </div>
      <Grass />
    </div>
    <div className="-ml-[15px] flex h-[29px] shrink-0"><Taskbar time="23:07" extra={false} /></div>
    <div className="absolute top-[662px] left-[1137px]"><InputBar /></div>
  </div>
);

const OuterEdge = () => (
  <div className="flex w-[15px] shrink-0">
    <div className="flex w-1 shrink-0 flex-col border-r border-[#999] bg-[#eee]">
      <div className="h-[23px] bg-white" />
      <div className="h-[22px] border-b border-[#999] bg-[#e8e8e8]" />
      <div className="h-[31px] border-b border-[#aaa] bg-[#eee]" />
      <div className="h-6 border-b border-[#999] bg-[#d4d4d4]" />
    </div>
    <div className="flex flex-1 flex-col overflow-hidden bg-[#f0f0f0]">
      <div className="flex h-[50px] shrink-0 items-end border-b border-[#ccd] bg-white"><div className="-ml-1.5 mb-1.5 flex h-3.5 w-3.5 items-center justify-center rounded-full bg-[#1976d2] text-[11px] font-bold text-white">?</div></div>
      <div className="h-[108px] shrink-0 border-b border-[#ccd] bg-linear-to-r from-[#d9dadd] to-[#f0f2f8]" />
      <div className="h-[35px] shrink-0 bg-linear-to-r from-[#ddd] to-white" />
      <div className="flex h-[17px] shrink-0 items-center"><Svg w={8} h={6} box="0 0 8 6"><path d="M.5 5L4 1.500 7.500 5" stroke="#555" strokeWidth="2" /></Svg></div>
      <div className="h-[467px] shrink-0 bg-linear-to-r from-[#aaa] to-[#cacaca]" />
      <div className="flex flex-1 items-center pt-5"><Svg w={8} h={6} box="0 0 8 6"><path d="M.5 1L4 4.500 7.500 1" stroke="#555" strokeWidth="2" /></Svg></div>
    </div>
  </div>
);

export default function App() {
  return (
    <div className="relative flex h-[768px] w-[1366px] flex-col overflow-hidden bg-[#e8e8e8] font-['Noto_Sans','Noto_Sans_CJK_SC',sans-serif] text-black">
      <div className="flex h-[718px] shrink-0">
        <InnerDesktop />
        <OuterEdge />
      </div>
      <div className="relative flex h-[21px] shrink-0 overflow-hidden bg-[#e8e8e8] pt-[3px] pl-[9px]">
        <MemoryBox />
        <div className="absolute -top-[7px] left-[1152px]"><InputBar /></div>
        <div className="absolute -top-0.5 left-[1351px] h-[21px] w-[11px] border border-[#4ba3d5] bg-[#e5f2fa] pt-1.5 pl-0.5"><div className="h-2 w-1.5 border border-[#888] bg-[#7aaede]" /></div>
      </div>
      <div className="flex h-[29px] shrink-0"><Taskbar time="23:02" extra /></div>
    </div>
  );
}
